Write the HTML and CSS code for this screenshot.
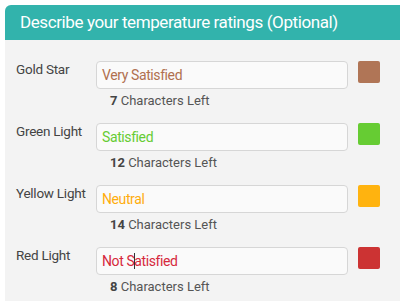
FILE: index.html
```html
<!DOCTYPE html>
<html>
<head>
<meta charset="utf-8">
<link rel="stylesheet" href="styles.css">
</head>
<body>
<div class="panel">
  <div class="panel-head">Describe your temperature ratings (Optional)</div>
  <div class="panel-body">
    <div class="row">
      <div class="label">Gold Star</div>
      <div class="field">
        <div class="input gold">Very Satisfied</div>
        <div class="hint"><b>7</b> Characters Left</div>
      </div>
      <div class="swatch sw-gold"></div>
    </div>
    <div class="row">
      <div class="label">Green Light</div>
      <div class="field">
        <div class="input green">Satisfied</div>
        <div class="hint"><b>12</b> Characters Left</div>
      </div>
      <div class="swatch sw-green"></div>
    </div>
    <div class="row">
      <div class="label">Yellow Light</div>
      <div class="field">
        <div class="input yellow">Neutral</div>
        <div class="hint"><b>14</b> Characters Left</div>
      </div>
      <div class="swatch sw-yellow"></div>
    </div>
    <div class="row">
      <div class="label">Red Light</div>
      <div class="field">
        <div class="input red">Not S<span class="caret"></span>atisfied</div>
        <div class="hint"><b>8</b> Characters Left</div>
      </div>
      <div class="swatch sw-red"></div>
    </div>
  </div>
</div>
</body>
</html>
```
FILE: styles.css
```css
html, body {
  margin: 0;
  padding: 0;
  background: #ffffff;
  overflow: hidden;
}
body {
  font-family: Roboto, "Liberation Sans", sans-serif;
  width: 400px;
  height: 301px;
}
.panel {
  margin: 5px 0 0 5px;
  width: 420px;
  border-radius: 6px 6px 0 0;
  overflow: hidden;
  background: #f3f3f3;
}
.panel-head {
  background: #32b3ac;
  color: #ffffff;
  height: 35px;
  line-height: 35px;
  padding-left: 15px;
  font-size: 17px;
  letter-spacing: -0.4px;
}
.panel-body {
  padding: 21px 0 20px 11px;
}
.row {
  display: flex;
  align-items: flex-start;
  height: 62px;
}
.label {
  width: 80px;
  font-size: 13.5px;
  letter-spacing: -0.25px;
  color: #444444;
  line-height: 16px;
}
.field {
  width: 252px;
  display: flex;
  flex-direction: column;
}
.input {
  box-sizing: border-box;
  height: 28px;
  border: 1px solid #d6d6d6;
  border-radius: 4px;
  background: #fafafa;
  padding-left: 5px;
  font-size: 14px;
  letter-spacing: -0.4px;
  line-height: 26px;
}
.gold { color: #b0704f; }
.green { color: #66cc33; }
.yellow { color: #ffad0d; }
.red { color: #d6283c; }
.caret {
  display: inline-block;
  width: 1px;
  height: 16px;
  background: #333333;
  vertical-align: -3px;
  margin: 0 -0.5px;
}
.hint {
  padding-left: 14px;
  margin-top: 4px;
  font-size: 13px;
  line-height: 16px;
  color: #555555;
}
.hint b {
  font-weight: 700;
  color: #444444;
}
.swatch {
  width: 22px;
  height: 22px;
  border-radius: 2px;
  margin-left: 10px;
}
.sw-gold { background: #b07556; }
.sw-green { background: #66cc33; }
.sw-yellow { background: #ffb30f; }
.sw-red { background: #cc3333; }
```
